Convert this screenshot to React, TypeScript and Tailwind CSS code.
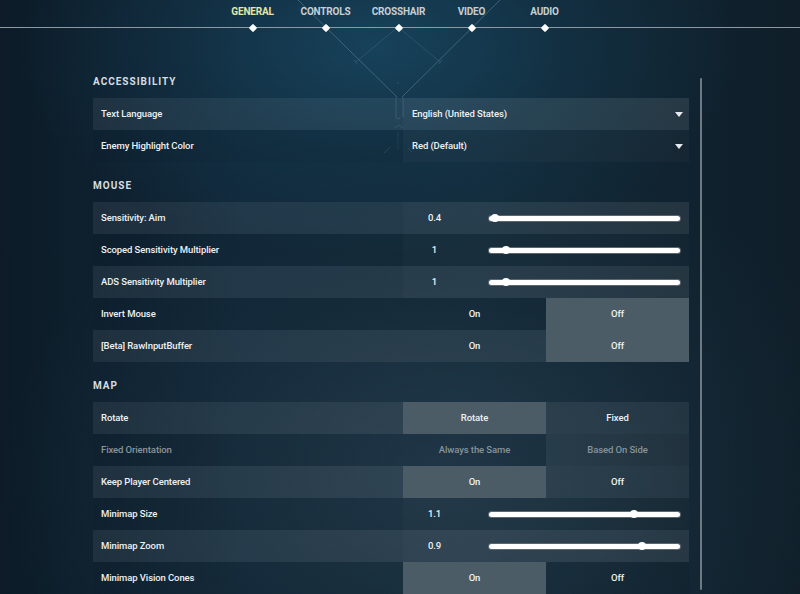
import React from 'react';

const tabs = ['General', 'Controls', 'Crosshair', 'Video', 'Audio'];

type Row =
  | { kind: 'select'; label: string; value: string }
  | { kind: 'slider'; label: string; value: string; pos: number }
  | { kind: 'toggle'; label: string; options: [string, string]; active: 0 | 1; disabled?: boolean };

const sections: { title: string; rows: Row[] }[] = [
  {
    title: 'Accessibility',
    rows: [
      { kind: 'select', label: 'Text Language', value: 'English (United States)' },
      { kind: 'select', label: 'Enemy Highlight Color', value: 'Red (Default)' },
    ],
  },
  {
    title: 'Mouse',
    rows: [
      { kind: 'slider', label: 'Sensitivity: Aim', value: '0.4', pos: 3 },
      { kind: 'slider', label: 'Scoped Sensitivity Multiplier', value: '1', pos: 9 },
      { kind: 'slider', label: 'ADS Sensitivity Multiplier', value: '1', pos: 9 },
      { kind: 'toggle', label: 'Invert Mouse', options: ['On', 'Off'], active: 1 },
      { kind: 'toggle', label: '[Beta] RawInputBuffer', options: ['On', 'Off'], active: 1 },
    ],
  },
  {
    title: 'Map',
    rows: [
      { kind: 'toggle', label: 'Rotate', options: ['Rotate', 'Fixed'], active: 0 },
      { kind: 'toggle', label: 'Fixed Orientation', options: ['Always the Same', 'Based On Side'], active: 1, disabled: true },
      { kind: 'toggle', label: 'Keep Player Centered', options: ['On', 'Off'], active: 0 },
      { kind: 'slider', label: 'Minimap Size', value: '1.1', pos: 76 },
      { kind: 'slider', label: 'Minimap Zoom', value: '0.9', pos: 80 },
      { kind: 'toggle', label: 'Minimap Vision Cones', options: ['On', 'Off'], active: 0 },
    ],
  },
];

function Caret() {
  return (
    <svg width="8" height="5" viewBox="0 0 8 5" className="mr-[6px]">
      <path d="M0 0 L8 0 L4 5 Z" fill="#e6eaee" />
    </svg>
  );
}

function Value({ row }: { row: Row }) {
  if (row.kind === 'select') {
    return (
      <div className="flex h-full w-full items-center justify-between bg-white/[0.03] pl-[9px]">
        <span>{row.value}</span>
        <Caret />
      </div>
    );
  }
  if (row.kind === 'slider') {
    return (
      <div className="flex h-full w-full items-center bg-white/[0.02]">
        <span className="w-[63px] text-center">{row.value}</span>
        <div className="relative ml-[23px] mr-[9px] h-[5px] flex-1 rounded-full bg-white ring-1 ring-[#5b6770]">
          <div
            className="absolute top-1/2 h-[8px] w-[8px] -translate-x-1/2 -translate-y-1/2 rounded-full bg-white"
            style={{ left: `${row.pos}%` }}
          />
        </div>
      </div>
    );
  }
  return (
    <div className="flex h-full w-full">
      {row.options.map((opt, i) => {
        const on = row.active === i;
        let cls = 'text-[#eef1f3]';
        if (row.disabled) cls = on ? 'bg-white/[0.06] text-[#87939b]' : 'text-[#87939b]';
        else if (on) cls = 'bg-[#4c5c67] text-[#eef1f3]';
        return (
          <div key={opt} className={`flex h-full flex-1 items-center justify-center ${cls}`}>
            {opt}
          </div>
        );
      })}
    </div>
  );
}

function Section({ title, rows, first }: { title: string; rows: Row[]; first?: boolean }) {
  return (
    <div className={first ? 'mt-[30px]' : ''}>
      <div className="flex h-[40px] items-center pt-[7px] text-[10px] font-bold uppercase tracking-[0.1em] text-[#d6dde2]">
        {title}
      </div>
      {rows.map((row, i) => (
        <div
          key={row.label}
          className={`flex h-[32px] items-center ${i % 2 === 0 ? 'bg-white/[0.065]' : 'bg-black/[0.04]'}`}
        >
          <div className={`w-[310px] pl-[8px] ${row.kind === 'toggle' && row.disabled ? 'text-[#8a959d]' : ''}`}>
            {row.label}
          </div>
          <div className="h-full w-[286px]">
            <Value row={row} />
          </div>
        </div>
      ))}
    </div>
  );
}

export default function App() {
  return (
    <div className="relative h-[594px] w-[800px] overflow-hidden bg-[#13222e] bg-[radial-gradient(ellipse_45%_35%_at_47%_8%,rgba(24,70,96,0.85)_0%,rgba(20,58,80,0.4)_55%,rgba(0,0,0,0)_100%),radial-gradient(ellipse_55%_55%_at_55%_80%,rgba(40,62,78,0.75)_0%,rgba(30,50,64,0.3)_60%,rgba(0,0,0,0)_100%),linear-gradient(90deg,#0c1b27_0%,#11283a_30%,#122a3a_60%,#0f1e29_100%)] font-['Roboto','Liberation_Sans',sans-serif] text-[9.5px] font-medium tracking-[-0.01em] text-[#eef1f3]">
      {/* decorative lines behind the tabs */}
      <svg className="pointer-events-none absolute inset-0" width="800" height="594">
        <g stroke="#5a8ba4" strokeWidth="0.8" fill="none" opacity="0.65">
          <line x1="298" y1="0" x2="397" y2="97" />
          <line x1="500" y1="0" x2="402" y2="97" />
          <line x1="398" y1="27" x2="356" y2="62" opacity="0.5" />
          <line x1="398" y1="27" x2="440" y2="62" opacity="0.5" />
          <path d="M354 60 L357 64 M442 60 L439 64" opacity="0.7" />
          <path d="M396 97 L396 117 Q396 119 398 119 Q400 119 400 117 M403 97 L403 117" opacity="0.6" />
          <path d="M395 128 L399 125 L403 128" opacity="0.5" />
          <path d="M398 131 L398 150" opacity="0.35" />
          <path d="M384 153 L390 147 M412 152 L408 148" opacity="0.5" />
          <line x1="398" y1="82" x2="398" y2="84" opacity="0.6" />
        </g>
      </svg>

      <div className="relative flex h-[28px] border-b-[1.5px] border-[#8c99a2] pl-[216px]">
        {tabs.map((t, i) => (
          <div
            key={t}
            className={`relative flex w-[73px] justify-center pt-[4px] text-[10px] font-bold uppercase tracking-[-0.02em] ${
              i === 0 ? 'text-[#e4e6a6]' : 'text-[#c5ced4]'
            }`}
          >
            {t}
            <span className="absolute bottom-[-4px] left-1/2 h-[6px] w-[6px] -translate-x-1/2 rotate-45 rounded-[1px] bg-white" />
          </div>
        ))}
      </div>

      <div className="relative flex">
        <div className="ml-[93px] w-[596px]">
          {sections.map((s, i) => (
            <Section key={s.title} title={s.title} rows={s.rows} first={i === 0} />
          ))}
        </div>
        <div className="ml-[11px] mt-[50px] h-[512px] w-[2px] rounded-full bg-[#6d7a83]" />
      </div>
    </div>
  );
}
